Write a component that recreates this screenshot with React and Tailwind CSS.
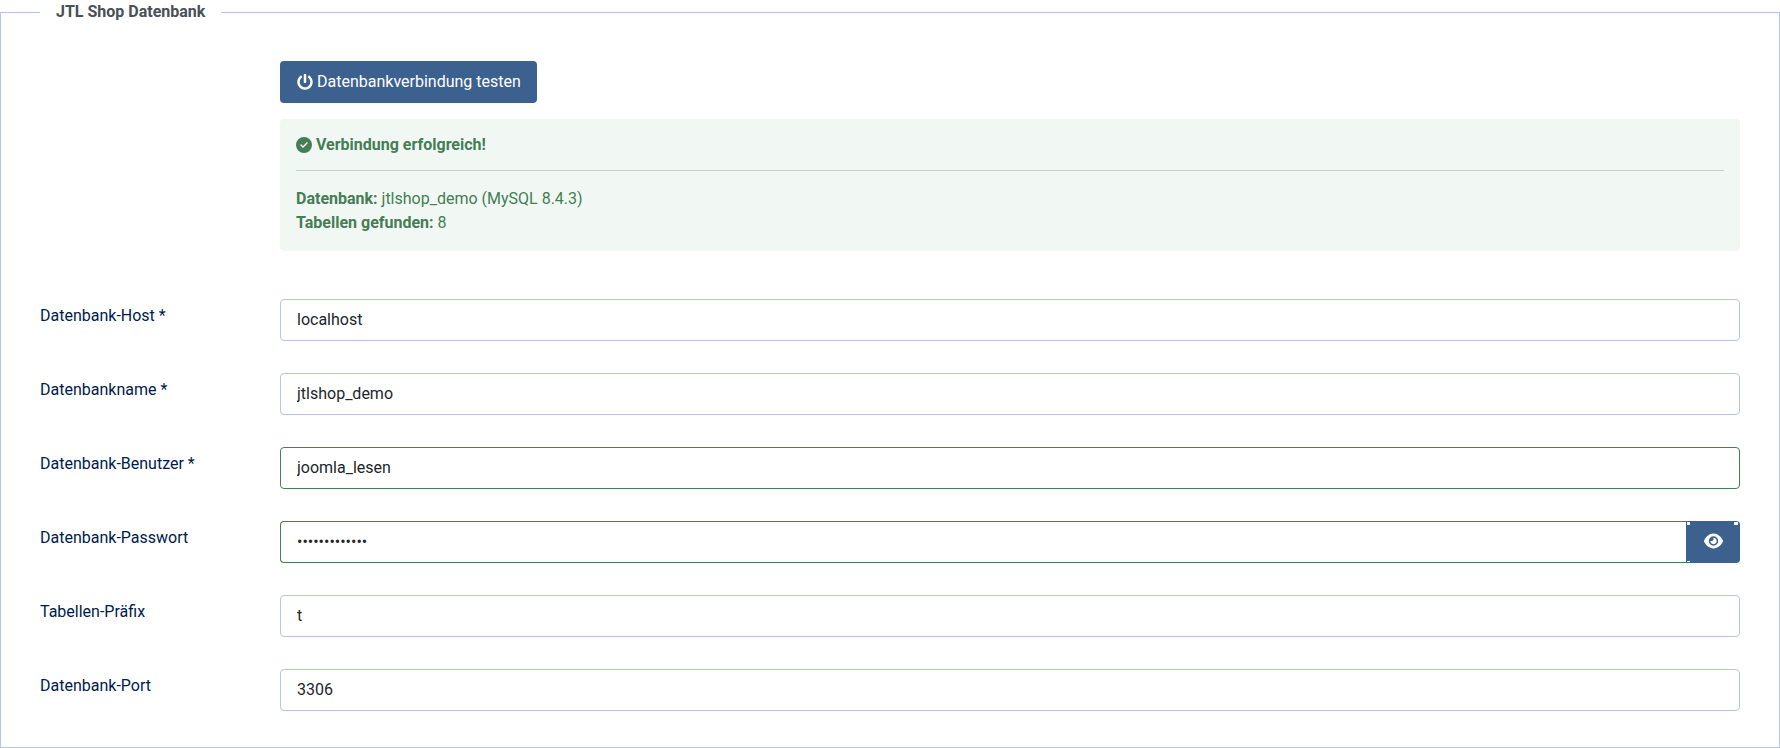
import React, { useState } from 'react';
import { FaPowerOff } from 'react-icons/fa';
import { FaCircleCheck, FaEye } from 'react-icons/fa6';

const fields = [
  { id: 'db-host', label: 'Datenbank-Host *', value: 'localhost' },
  { id: 'db-name', label: 'Datenbankname *', value: 'jtlshop_demo' },
  { id: 'db-user', label: 'Datenbank-Benutzer *', value: 'joomla_lesen', valid: true },
  { id: 'db-password', label: 'Datenbank-Passwort', value: 'demo-passwort', valid: true, password: true },
  { id: 'db-prefix', label: 'Tabellen-Präfix', value: 't' },
  { id: 'db-port', label: 'Datenbank-Port', value: '3306' },
];

const inputClass =
  'h-[42px] min-w-0 flex-1 border bg-white px-4 pb-0.5 text-base text-[#22262a] outline-none';

// Passwortfeld mit Umschalter für die Klartextanzeige
function PasswordInput({ id, value, borderClass }) {
  const [visible, setVisible] = useState(false);

  return (
    <>
      <input
        id={id}
        type={visible ? 'text' : 'password'}
        defaultValue={value}
        className={`${inputClass} rounded-l border-r-0 ${borderClass}`}
      />
      <button
        type="button"
        aria-label="Passwort anzeigen"
        onClick={() => setVisible(!visible)}
        className="relative flex w-[54px] items-center justify-center rounded-r bg-[#3d618f] pb-0.5 text-white"
      >
        <FaEye className="h-[18px] w-[19px]" />
        <span className="absolute top-px left-px h-[3px] w-[3px] bg-white" />
        <span className="absolute top-px right-[2px] h-[3px] w-1 bg-white" />
        <span className="absolute bottom-px left-px h-px w-[3px] bg-white" />
      </button>
    </>
  );
}

function FieldRow({ id, label, value, valid = false, password = false }) {
  const borderClass = valid ? 'border-[#457d54]' : 'border-[#b5c5e2]';

  return (
    <div className="flex">
      <label htmlFor={id} className="w-60 shrink-0 pt-[5px] text-[#001b4c]">
        {label}
      </label>
      <div className="flex min-w-0 flex-1">
        {password ? (
          <PasswordInput id={id} value={value} borderClass={borderClass} />
        ) : (
          <input
            id={id}
            type="text"
            defaultValue={value}
            className={`${inputClass} rounded ${borderClass}`}
          />
        )}
      </div>
    </div>
  );
}

export default function App() {
  return (
    <fieldset className="border border-[#b5c5e2] bg-white px-[39px] pt-[37px] pb-9 font-[Roboto,sans-serif] text-base">
      <legend className="px-4 font-bold text-[#495057]">JTL Shop Datenbank</legend>

      <div className="ml-60">
        <button
          type="button"
          className="flex h-[42px] items-center gap-1 rounded bg-[#3d618f] pr-4 pl-[17px] text-white"
        >
          <FaPowerOff className="h-4 w-4" />
          Datenbankverbindung testen
        </button>

        <div role="alert" className="mt-4 rounded bg-[#f1f8f4] p-4 text-[#457d54]">
          <h4 className="flex items-center gap-1 leading-[19px] font-bold">
            <FaCircleCheck className="h-4 w-4" />
            Verbindung erfolgreich!
          </h4>
          <hr className="my-4 border-[#bdd6c8]" />
          <p>
            <strong className="font-bold">Datenbank:</strong> jtlshop_demo (MySQL 8.4.3)
          </p>
          <p>
            <strong className="font-bold">Tabellen gefunden:</strong> 8
          </p>
        </div>
      </div>

      <div className="mt-12 flex flex-col gap-8">
        {fields.map((field) => (
          <FieldRow key={field.id} {...field} />
        ))}
      </div>
    </fieldset>
  );
}
